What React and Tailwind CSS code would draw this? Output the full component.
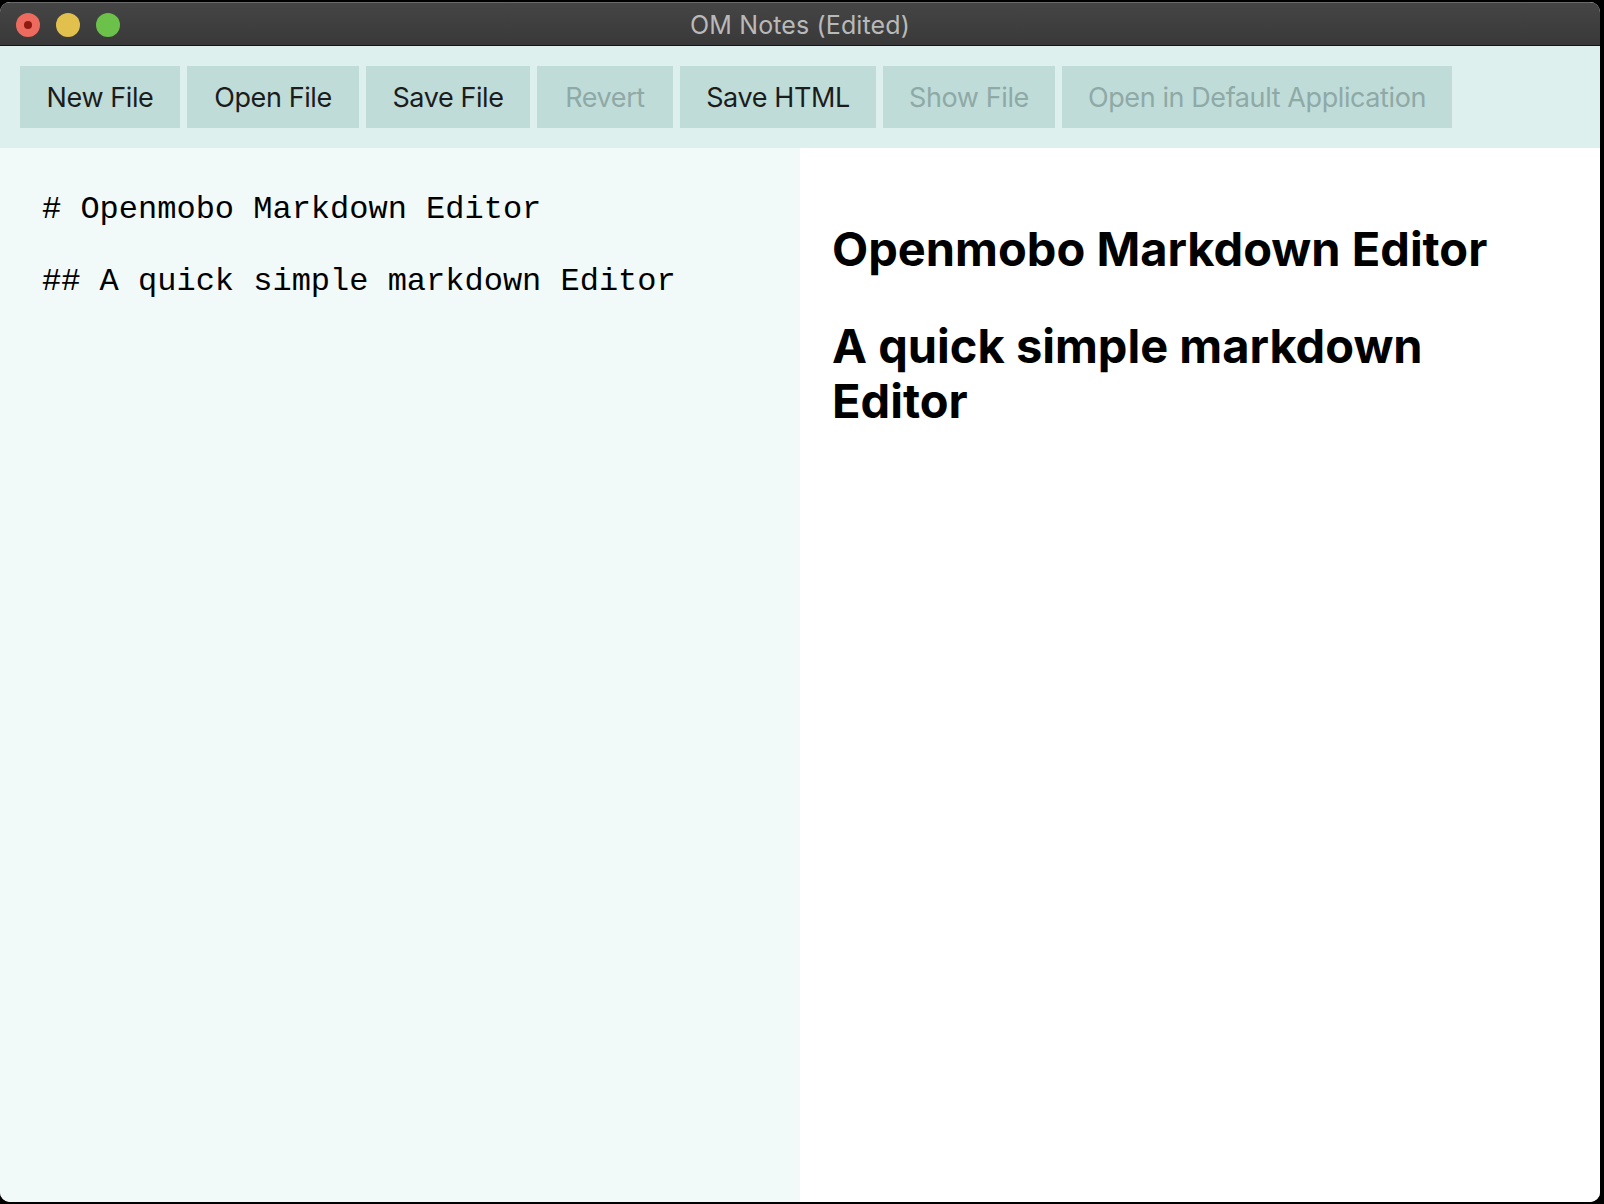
import React from "react";

const buttons = [
  { label: "New File", w: "w-[160px]", disabled: false },
  { label: "Open File", w: "w-[172px]", disabled: false },
  { label: "Save File", w: "w-[164px]", disabled: false },
  { label: "Revert", w: "w-[136px]", disabled: true },
  { label: "Save HTML", w: "w-[196px]", disabled: false },
  { label: "Show File", w: "w-[172px]", disabled: true },
  { label: "Open in Default Application", w: "w-[390px]", disabled: true },
];

export default function App() {
  return (
    <div className="w-[1604px] h-[1204px] bg-black pt-[2px] overflow-hidden">
      <div className="w-[1600px] h-[1200px] rounded-[10px] overflow-hidden flex flex-col bg-white">
        {/* Title bar */}
        <div className="relative h-[44px] shrink-0 bg-gradient-to-b from-[#454545] to-[#393939] border-t border-[#6a6a6a] border-b border-b-[#141414] flex items-center justify-center">
          <div className="absolute left-[16px] top-[10px] flex gap-[16px]">
            <div className="w-[24px] h-[24px] rounded-full bg-[#ec6a5e] flex items-center justify-center">
              <div className="w-[8px] h-[8px] rounded-full bg-[#8d1b10]" />
            </div>
            <div className="w-[24px] h-[24px] rounded-full bg-[#e2c04d]" />
            <div className="w-[24px] h-[24px] rounded-full bg-[#6cc14a]" />
          </div>
          <span className="mt-[3px] text-[25px] text-[#b9b9b9] font-['Inter',sans-serif] tracking-[0.005em]">
            OM Notes (Edited)
          </span>
        </div>

        {/* Toolbar */}
        <div className="h-[102px] shrink-0 bg-[#ddf0ed] p-[20px] flex gap-[7px]">
          {buttons.map((b) => (
            <button
              key={b.label}
              className={`${b.w} h-[62px] pt-[3px] bg-[#bfdcd9] flex items-center justify-center text-[27px] font-['Inter',sans-serif] tracking-[-0.015em] ${
                b.disabled ? "text-[#8fa9a6]" : "text-[#1c1c1c]"
              }`}
            >
              {b.label}
            </button>
          ))}
        </div>

        {/* Content */}
        <div className="flex flex-1 min-h-0">
          <div className="w-[800px] shrink-0 bg-[#f1faf8] pt-[44px] pl-[42px] font-['Liberation_Mono','Courier_New',monospace] text-[32px] leading-[36px] text-black whitespace-pre">
            <div># Openmobo Markdown Editor</div>
            <div>{" "}</div>
            <div>## A quick simple markdown Editor</div>
          </div>
          <div className="flex-1 bg-white pt-[73px] pl-[32px] pr-[44px] font-['Inter',sans-serif] text-black">
            <h1 className="text-[47px] font-bold leading-[55px] mb-[42px]">
              Openmobo Markdown Editor
            </h1>
            <h2 className="text-[47px] font-bold leading-[55px]">
              A quick simple markdown Editor
            </h2>
          </div>
        </div>
      </div>
    </div>
  );
}
